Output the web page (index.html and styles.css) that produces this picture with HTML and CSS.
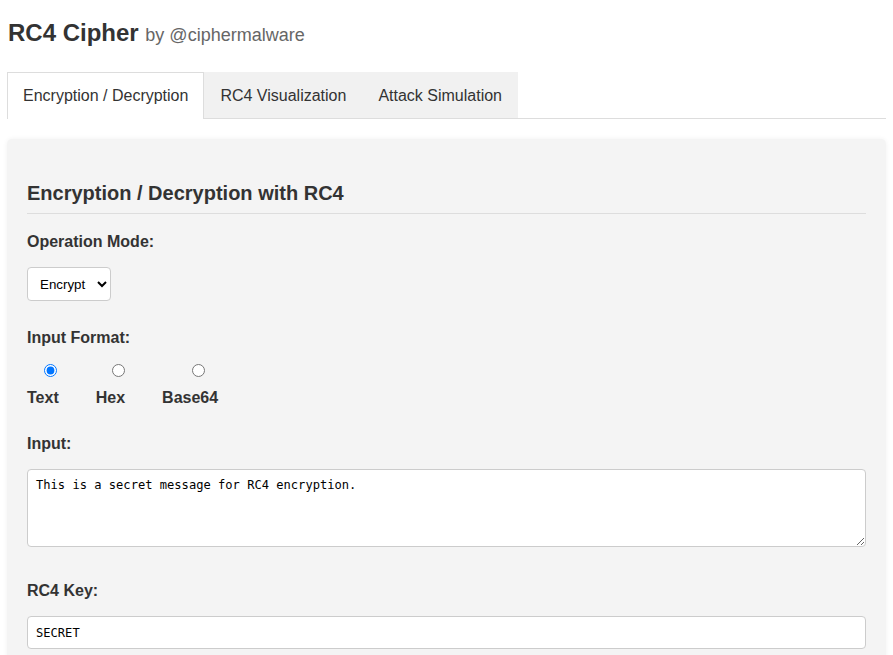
FILE: index.html
```html
<!DOCTYPE html>
<html lang="en">
<head>
<meta charset="utf-8">
<title>RC4 Cipher</title>
<link rel="stylesheet" href="styles.css">
</head>
<body>
<div class="page">
  <h1 class="title">RC4 Cipher <span class="byline">by @ciphermalware</span></h1>

  <div class="tabs">
    <div class="tab active">Encryption / Decryption</div>
    <div class="tab">RC4 Visualization</div>
    <div class="tab">Attack Simulation</div>
  </div>

  <div class="panel">
    <h2 class="panel-title">Encryption / Decryption with RC4</h2>

    <div class="group">
      <label class="label" for="mode">Operation Mode:</label>
      <select id="mode" class="select">
        <option>Encrypt</option>
        <option>Decrypt</option>
      </select>
    </div>

    <div class="group">
      <div class="label">Input Format:</div>
      <div class="radios">
        <label class="option"><input type="radio" name="fmt" class="radio" checked><span class="option-text">Text</span></label>
        <label class="option"><input type="radio" name="fmt" class="radio"><span class="option-text">Hex</span></label>
        <label class="option"><input type="radio" name="fmt" class="radio"><span class="option-text">Base64</span></label>
      </div>
    </div>

    <div class="group group-wide">
      <label class="label" for="input">Input:</label>
      <textarea id="input" class="textarea">This is a secret message for RC4 encryption.</textarea>
    </div>

    <div class="group">
      <label class="label" for="key">RC4 Key:</label>
      <input id="key" class="text-input" type="text" value="SECRET">
    </div>
  </div>
</div>
</body>
</html>
```

FILE: styles.css
```css
html, body {
  margin: 0;
  padding: 0;
  background: #ffffff;
}

body {
  font-family: "Liberation Sans", Arial, sans-serif;
  color: #333333;
}

.page {
  padding: 0 7px 0 7px;
}

.title {
  margin: 0;
  padding: 19px 0 0 1px;
  font-size: 24px;
  line-height: 28px;
  font-weight: bold;
  color: #333333;
}

.byline {
  font-size: 18px;
  font-weight: normal;
  color: #666666;
}

.tabs {
  margin-top: 23px;
  display: flex;
  border-bottom: 1px solid #dddddd;
}

.tab {
  background: #f1f1f1;
  padding: 15px 16px 13px;
  font-size: 16px;
  line-height: 18px;
  color: #333333;
}

.tab.active {
  background: #ffffff;
  border: 1px solid #dddddd;
  border-bottom: none;
  padding: 14px 15px 14px;
  margin-bottom: -1px;
}

.panel {
  margin-top: 20px;
  background: #f4f4f4;
  border-radius: 5px;
  padding: 20px 20px 30px;
  box-shadow: 0 0 5px rgba(0, 0, 0, 0.06);
}

.panel-title {
  margin: 23px 0 18px;
  padding-bottom: 8px;
  border-bottom: 1px solid #dddddd;
  font-size: 20px;
  line-height: 23px;
  font-weight: bold;
  color: #333333;
}

.group {
  margin-bottom: 27px;
}

.group-wide {
  margin-bottom: 34px;
}

.label {
  display: block;
  font-size: 16px;
  line-height: 18px;
  font-weight: bold;
  padding-top: 1px;
  margin-bottom: 16px;
  color: #333333;
}

.select {
  display: block;
  font-family: "Liberation Sans", Arial, sans-serif;
  font-size: 13.33px;
  padding: 8px;
  border: 1px solid #cccccc;
  border-radius: 4px;
  background: #ffffff;
  color: #000000;
  height: 34px;
}

.radios {
  display: flex;
  gap: 37px;
}

.option {
  display: flex;
  flex-direction: column;
  align-items: center;
  font-size: 16px;
  line-height: 18px;
  font-weight: bold;
  color: #333333;
}

.radio {
  width: 13px;
  height: 13px;
  margin: 1px 0 0 16px;
}

.option-text {
  margin-top: 12px;
}

.textarea {
  display: block;
  box-sizing: border-box;
  width: 100%;
  height: 78px;
  padding: 8px;
  border: 1px solid #cccccc;
  border-radius: 4px;
  background: #ffffff;
  font-family: "DejaVu Sans Mono", "Liberation Mono", monospace;
  font-size: 12.1px;
  color: #000000;
  resize: vertical;
}

.text-input {
  display: block;
  box-sizing: border-box;
  width: 100%;
  height: 33px;
  padding: 8px;
  border: 1px solid #cccccc;
  border-radius: 4px;
  background: #ffffff;
  font-family: "DejaVu Sans Mono", "Liberation Mono", monospace;
  font-size: 12.1px;
  color: #000000;
}
```
